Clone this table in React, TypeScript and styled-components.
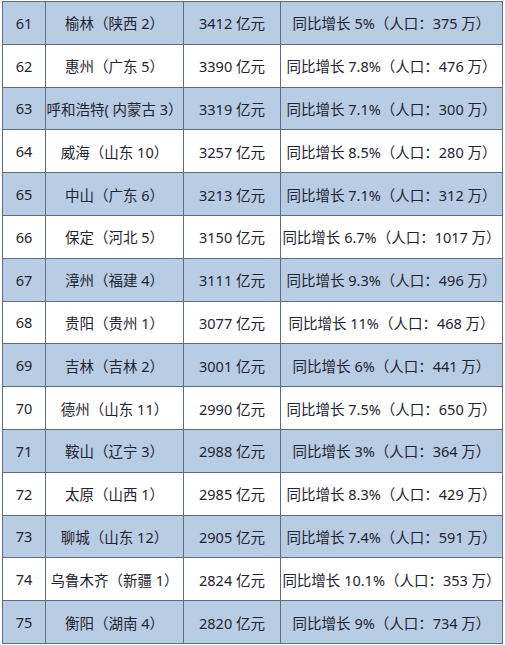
import React from "react";
import styled, { createGlobalStyle } from "styled-components";

const GlobalStyle = createGlobalStyle`
  html, body {
    margin: 0;
    padding: 0;
    background: #ffffff;
  }
  body {
    font-family: "Noto Sans", "Noto Sans CJK SC", sans-serif;
  }
`;

const Page = styled.div`
  width: 505px;
  height: 645px;
  overflow: hidden;
  padding: 1px 0 0 2px;
  box-sizing: border-box;
`;

const Table = styled.table`
  border-collapse: collapse;
  table-layout: fixed;
  width: 501px;
  font-size: 14.5px;
  color: #1e2530;
`;

const Row = styled.tr<{ $shaded: boolean }>`
  height: 42.8px;
  background: ${(props) => (props.$shaded ? "#b8cce4" : "#ffffff")};
`;

const Cell = styled.td<{ $width?: number }>`
  width: ${(props) => (props.$width ? `${props.$width}px` : "auto")};
  border: 1px solid #5d6d80;
  text-align: center;
  vertical-align: middle;
  padding: 0;
  white-space: nowrap;
  overflow: hidden;
`;

interface CityRow {
  rank: number;
  city: string;
  gdp: string;
  growth: string;
}

const rows: CityRow[] = [
  { rank: 61, city: "榆林（陕西 2）", gdp: "3412 亿元", growth: "同比增长 5%（人口：375 万）" },
  { rank: 62, city: "惠州（广东 5）", gdp: "3390 亿元", growth: "同比增长 7.8%（人口：476 万）" },
  { rank: 63, city: "呼和浩特( 内蒙古 3）", gdp: "3319 亿元", growth: "同比增长 7.1%（人口：300 万）" },
  { rank: 64, city: "威海（山东 10）", gdp: "3257 亿元", growth: "同比增长 8.5%（人口：280 万）" },
  { rank: 65, city: "中山（广东 6）", gdp: "3213 亿元", growth: "同比增长 7.1%（人口：312 万）" },
  { rank: 66, city: "保定（河北 5）", gdp: "3150 亿元", growth: "同比增长 6.7%（人口：1017 万）" },
  { rank: 67, city: "漳州（福建 4）", gdp: "3111 亿元", growth: "同比增长 9.3%（人口：496 万）" },
  { rank: 68, city: "贵阳（贵州 1）", gdp: "3077 亿元", growth: "同比增长 11%（人口：468 万）" },
  { rank: 69, city: "吉林（吉林 2）", gdp: "3001 亿元", growth: "同比增长 6%（人口：441 万）" },
  { rank: 70, city: "德州（山东 11）", gdp: "2990 亿元", growth: "同比增长 7.5%（人口：650 万）" },
  { rank: 71, city: "鞍山（辽宁 3）", gdp: "2988 亿元", growth: "同比增长 3%（人口：364 万）" },
  { rank: 72, city: "太原（山西 1）", gdp: "2985 亿元", growth: "同比增长 8.3%（人口：429 万）" },
  { rank: 73, city: "聊城（山东 12）", gdp: "2905 亿元", growth: "同比增长 7.4%（人口：591 万）" },
  { rank: 74, city: "乌鲁木齐（新疆 1）", gdp: "2824 亿元", growth: "同比增长 10.1%（人口：353 万）" },
  { rank: 75, city: "衡阳（湖南 4）", gdp: "2820 亿元", growth: "同比增长 9%（人口：734 万）" },
];

export default function App() {
  return (
    <Page>
      <GlobalStyle />
      <Table>
        <tbody>
          {rows.map((row, index) => (
            <Row key={row.rank} $shaded={index % 2 === 0}>
              <Cell $width={42}>{row.rank}</Cell>
              <Cell $width={137}>{row.city}</Cell>
              <Cell $width={96}>{row.gdp}</Cell>
              <Cell>{row.growth}</Cell>
            </Row>
          ))}
        </tbody>
      </Table>
    </Page>
  );
}
